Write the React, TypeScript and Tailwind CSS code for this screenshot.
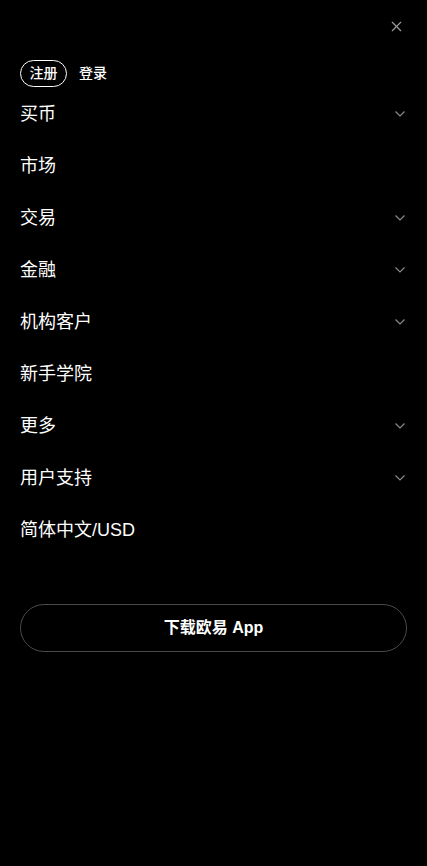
import { X } from "lucide-react";

const items: { label: string; more: boolean }[] = [
  { label: "买币", more: true },
  { label: "市场", more: false },
  { label: "交易", more: true },
  { label: "金融", more: true },
  { label: "机构客户", more: true },
  { label: "新手学院", more: false },
  { label: "更多", more: true },
  { label: "用户支持", more: true },
  { label: "简体中文/USD", more: false },
];

function Chevron() {
  return (
    <svg width="10" height="6" viewBox="0 0 10 6" fill="none" className="text-[#8a8a8a]">
      <path d="M0.5 0.5L5 5L9.5 0.5" stroke="currentColor" strokeWidth="1.2" />
    </svg>
  );
}

export default function App() {
  return (
    <div
      className="min-h-[866px] w-full bg-black text-white"
      style={{ fontFamily: '"Liberation Sans", "Noto Sans CJK SC", sans-serif' }}
    >
      <div className="flex h-[52px] items-center justify-end pr-[22px]">
        <X size={17} strokeWidth={1.5} className="text-[#a0a0a0]" />
      </div>
      <div className="mt-[8px] flex items-center gap-[12px] px-5">
        <span className="flex h-[27px] items-center rounded-full border border-white px-[8.5px] text-[14px] font-medium">
          注册
        </span>
        <span className="text-[14px] font-medium">登录</span>
      </div>
      <nav className="mt-[1px] flex flex-col px-5">
        {items.map((it) => (
          <div key={it.label} className="flex h-[52px] items-center justify-between">
            <span className="text-[18px]">{it.label}</span>
            {it.more && (
              <span className="pr-[2px]">
                <Chevron />
              </span>
            )}
          </div>
        ))}
      </nav>
      <div className="mt-[48px] px-5">
        <button className="flex h-[48px] w-full items-center justify-center rounded-full border border-[#4a4a4a] text-[16px] font-semibold text-white">
          下载欧易 App
        </button>
      </div>
    </div>
  );
}
